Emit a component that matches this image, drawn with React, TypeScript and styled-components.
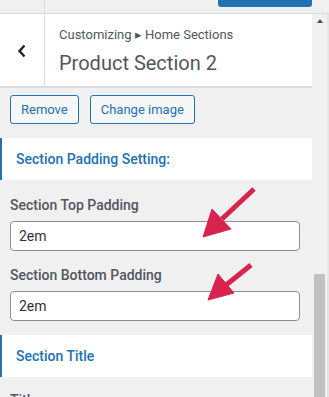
import styled, { createGlobalStyle } from 'styled-components';

const GlobalStyle = createGlobalStyle`
  html, body {
    margin: 0;
    padding: 0;
    background: #f0f0f1;
  }
  * {
    box-sizing: border-box;
  }
`;

// Pantalla del personalizador
const App = () => {
  return (
    <>
      <GlobalStyle />
      <Screen>
        <TopBar>
          <TopSpacer />
          <PublishButton />
        </TopBar>
        <Body>
          <Panel>
            <Header>
              <BackButton aria-label="Back">
                <svg width="10" height="14" viewBox="0 0 10 14">
                  <path d="M7.5 1.5 L2.5 7 L7.5 12.5" fill="none" stroke="#1d2327" strokeWidth="2.4" />
                </svg>
              </BackButton>
              <HeaderText>
                <Breadcrumb>Customizing ▸ Home Sections</Breadcrumb>
                <PanelTitle>Product Section 2</PanelTitle>
              </HeaderText>
            </Header>

            <ButtonRow>
              <OutlineButton>Remove</OutlineButton>
              <OutlineButton>Change image</OutlineButton>
            </ButtonRow>

            <SectionHeading $top={14}>Section Padding Setting:</SectionHeading>

            <Field $top={15}>
              <FieldLabel>Section Top Padding</FieldLabel>
              <TextInput defaultValue="2em" />
            </Field>
            <Field $top={14}>
              <FieldLabel>Section Bottom Padding</FieldLabel>
              <TextInput defaultValue="2em" />
            </Field>

            <SectionHeading $top={14}>Section Title</SectionHeading>

            <Field $top={13}>
              <FieldLabel>Title</FieldLabel>
            </Field>
          </Panel>
          <ScrollBar>
            <ScrollUp />
            <ScrollThumb />
          </ScrollBar>
        </Body>

        <Annotations width="312" height="397" viewBox="0 0 312 397">
          <g fill="#d8234f" stroke="#d8234f" strokeLinejoin="round">
            <line x1="254" y1="189" x2="222" y2="219" strokeWidth="5" />
            <polygon points="203,237 212,209 231,229" strokeWidth="1" />
            <line x1="251" y1="265" x2="226" y2="285" strokeWidth="5" />
            <polygon points="208,300 218,274 234,293" strokeWidth="1" />
          </g>
        </Annotations>
      </Screen>
    </>
  );
};

const Screen = styled.div`
  position: relative;
  width: 329px;
  height: 397px;
  overflow: hidden;
  background: #f0f0f1;
  font-family: Roboto, "Noto Sans", sans-serif;
  color: #50575e;
`;

const TopBar = styled.div`
  height: 14px;
  display: flex;
  border-bottom: 1px solid #dcdcde;
  padding-right: 17px;
`;

const TopSpacer = styled.div`
  width: 45px;
  border-right: 1px solid #dcdcde;
  margin-right: auto;
`;

const PublishButton = styled.div`
  width: 94px;
  height: 7px;
  background: #2271b1;
  border-radius: 0 0 3px 3px;
`;

const Body = styled.div`
  display: flex;
  height: 383px;
`;

const Panel = styled.div`
  width: 312px;
  display: flex;
  flex-direction: column;
  overflow: hidden;

  & > * {
    flex-shrink: 0;
  }
`;

const Header = styled.div`
  display: flex;
  height: 74px;
  background: #fff;
  border-bottom: 2px solid #dcdcde;
`;

const BackButton = styled.div`
  width: 45px;
  border-right: 1px solid #dcdcde;
  display: flex;
  align-items: center;
  justify-content: center;
  padding-top: 2px;
`;

const HeaderText = styled.div`
  padding: 12px 0 0 14px;
  display: flex;
  flex-direction: column;
`;

const Breadcrumb = styled.span`
  font-size: 13px;
  line-height: 18px;
  color: #50575e;
`;

const PanelTitle = styled.h1`
  margin: 6px 0 0;
  font-size: 20px;
  line-height: 26px;
  font-weight: 400;
  color: #50575e;
`;

const ButtonRow = styled.div`
  display: flex;
  gap: 11px;
  padding: 7px 10px 0;
`;

const OutlineButton = styled.button`
  height: 29px;
  padding: 0 10px;
  border: 1px solid #2271b1;
  border-radius: 3px;
  background: #f6f7f7;
  color: #2271b1;
  font-family: Roboto, "Noto Sans", sans-serif;
  font-size: 13px;
`;

const SectionHeading = styled.h3<{ $top: number }>`
  margin: ${(p) => p.$top}px 0 0;
  height: 42px;
  display: flex;
  align-items: center;
  padding-left: 14px;
  background: #fff;
  border-left: 2px solid #2271b1;
  color: #2271b1;
  font-size: 14px;
  font-weight: 500;
`;

const Field = styled.div<{ $top: number }>`
  margin-top: ${(p) => p.$top}px;
  padding: 0 12px 0 10px;
  display: flex;
  flex-direction: column;
  gap: 6px;
`;

const FieldLabel = styled.label`
  font-size: 14px;
  line-height: 20px;
  font-weight: 500;
  color: #50575e;
`;

const TextInput = styled.input`
  height: 30px;
  width: 290px;
  padding: 0 8px;
  border: 1px solid #8c8f94;
  border-radius: 4px;
  background: #fff;
  color: #2c3338;
  font-family: Roboto, "Noto Sans", sans-serif;
  font-size: 14px;
  outline: none;
`;

const ScrollBar = styled.div`
  position: relative;
  width: 17px;
  background: #f1f1f1;
  border-right: 2px solid #e6e6e6;
  display: flex;
  flex-direction: column;
  align-items: center;
`;

const ScrollUp = styled.div`
  margin-top: 5px;
  width: 0;
  height: 0;
  border-left: 3.5px solid transparent;
  border-right: 3.5px solid transparent;
  border-bottom: 4px solid #505050;
`;

const ScrollThumb = styled.div`
  margin-top: auto;
  width: 11px;
  height: 123px;
  background: #c1c1c1;
`;

const Annotations = styled.svg`
  position: absolute;
  top: 0;
  left: 0;
  pointer-events: none;
`;

export default App;
